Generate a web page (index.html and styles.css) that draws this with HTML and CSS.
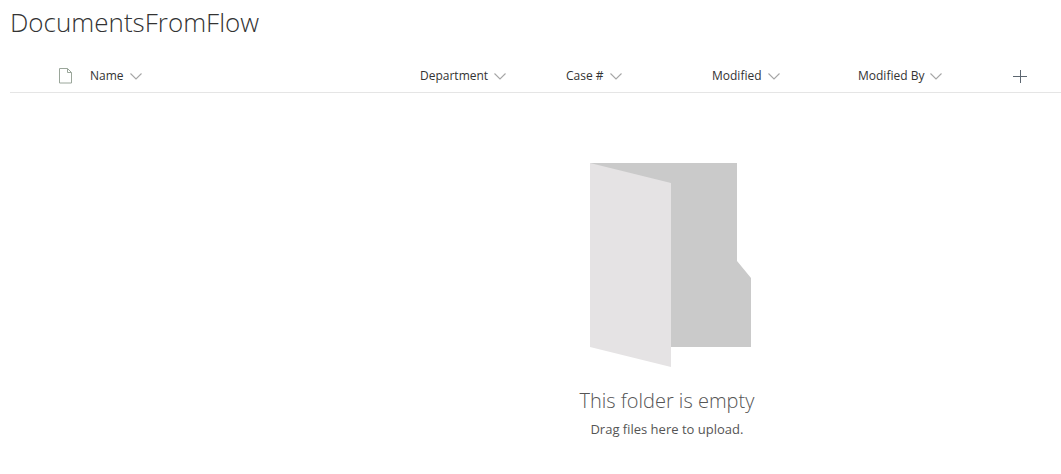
FILE: index.html
```html
<!DOCTYPE html>
<html lang="en">
<head>
<meta charset="utf-8">
<title>DocumentsFromFlow</title>
<link rel="stylesheet" href="styles.css">
</head>
<body>
<svg class="symbols" aria-hidden="true">
  <symbol id="chevron" viewBox="0 0 12 8"><path d="M.5 1.500 6 7 11.500 1.500" fill="none" stroke="currentColor" stroke-width="1.100"/></symbol>
</svg>
<main class="library">
  <h1 class="title">DocumentsFromFlow</h1>
  <table class="list">
    <thead>
      <tr>
        <th class="col-select"></th>
        <th class="col-type"><button class="head" aria-label="File type"><svg class="file" viewBox="0 0 14 16"><path d="M1.500.5h8l4 4v10.500h-12zM9.500.5v4h4" fill="none" stroke="currentColor"/></svg></button></th>
        <th class="col-name"><button class="head">Name<svg class="chevron"><use href="#chevron"/></svg></button></th>
        <th class="col-field"><button class="head">Department<svg class="chevron"><use href="#chevron"/></svg></button></th>
        <th class="col-field"><button class="head">Case #<svg class="chevron"><use href="#chevron"/></svg></button></th>
        <th class="col-field"><button class="head">Modified<svg class="chevron"><use href="#chevron"/></svg></button></th>
        <th class="col-field"><button class="head">Modified By<svg class="chevron"><use href="#chevron"/></svg></button></th>
        <th class="col-add"><button class="head" aria-label="Add column"><svg class="plus" viewBox="0 0 14 14"><path d="M0 7.500h14M7.500 1v13" fill="none" stroke="currentColor"/></svg></button></th>
      </tr>
    </thead>
  </table>
  <section class="empty">
    <svg class="folder" viewBox="0 0 170 206" aria-hidden="true">
      <path d="M8 1h147v98l14 17v69H8z" fill="#cacaca"/>
      <path d="M8 1l81 20v184L8 185z" fill="#e5e3e4"/>
    </svg>
    <h2 class="empty-title">This folder is empty</h2>
    <p class="empty-hint">Drag files here to upload.</p>
  </section>
</main>
</body>
</html>
```
FILE: styles.css
```css
body {
  margin: 0;
  background: #fff;
  color: #333;
  font-family: "Segoe UI", "Open Sans", "Noto Sans", sans-serif;
}
.symbols { display: none; }
.library { padding-left: 10px; }
.title {
  margin: 0;
  padding: 4px 0 20px;
  font-size: 26px;
  line-height: 36px;
  font-weight: 300;
}
.list {
  width: 100%;
  table-layout: fixed;
  border-collapse: collapse;
  border-bottom: 1px solid #e5e5e5;
}
.list th {
  height: 32px;
  padding: 0;
  text-align: left;
  font-weight: 400;
}
.col-select { width: 48px; }
.col-type { width: 32px; }
.col-name { width: 330px; }
.col-field { width: 146px; }
.head {
  display: flex;
  align-items: center;
  gap: 6px;
  padding: 0;
  border: 0;
  background: none;
  color: inherit;
  font: inherit;
  font-size: 12px;
  line-height: 16px;
  white-space: nowrap;
}
.chevron { width: 12px; height: 8px; color: #a6a6a6; }
.file { width: 14px; height: 16px; color: #9aa69a; }
.plus { width: 14px; height: 14px; color: #5c6670; }
.col-add .head { padding-left: 9px; }
.empty {
  display: flex;
  flex-direction: column;
  align-items: center;
  padding-top: 69px;
  padding-left: 25%;
}
.folder { width: 170px; height: 206px; }
.empty-title {
  margin: 0;
  padding-top: 19px;
  font-size: 20px;
  line-height: 28px;
  font-weight: 300;
  color: #555;
}
.empty-hint {
  margin: 0;
  padding-top: 5px;
  font-size: 13px;
  line-height: 18px;
  color: #555;
}
```
